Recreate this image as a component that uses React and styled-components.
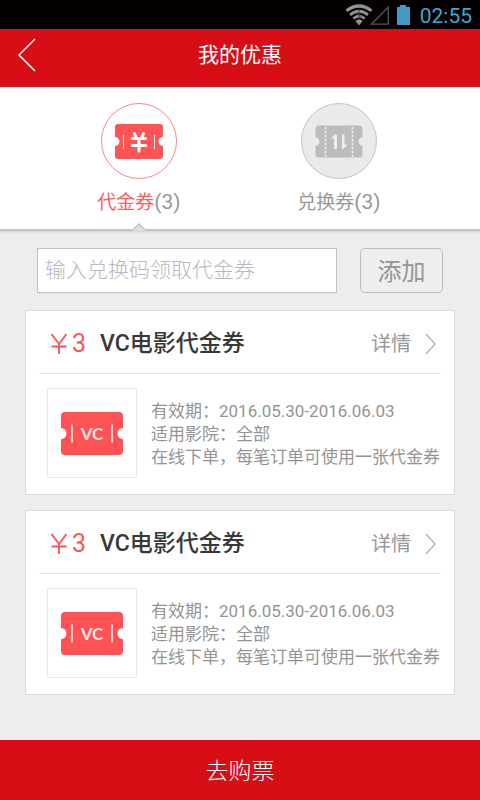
import React, { useState } from 'react';
import styled, { createGlobalStyle } from 'styled-components';

const GlobalStyle = createGlobalStyle`
  *, *::before, *::after { box-sizing: border-box; }
  body {
    margin: 0;
    background: #ededed;
    font-family: Roboto, "Noto Sans CJK SC", sans-serif;
    color: #8f8f8f;
  }
  button, input { font-family: inherit; margin: 0; }
  button { cursor: pointer; }
  h1, h2, p, ul { margin: 0; padding: 0; font-weight: inherit; }
`;

const Screen = styled.div`
  min-height: 100vh;
  display: flex;
  flex-direction: column;
`;

const StatusBar = styled.div`
  height: 29px;
  padding: 0 8px 0 0;
  background: #040000;
  display: flex;
  align-items: center;
  justify-content: flex-end;
`;

const StatusIcons = styled.svg`
  display: block;
  margin-right: 9px;
`;

const Clock = styled.time`
  color: #3ea6d2;
  font-size: 21px;
  line-height: 28px;
  padding-top: 3px;
`;

const Header = styled.header`
  height: 58px;
  padding: 0 10px;
  background: #d80e17;
  color: #fff;
  display: grid;
  grid-template-columns: 36px 1fr 36px;
  align-items: center;
`;

const BackButton = styled.button`
  padding: 0 0 6px 8px;
  border: 0;
  background: none;
  color: inherit;
  display: flex;
`;

const Title = styled.h1`
  font-size: 21px;
  line-height: 30px;
  padding-bottom: 6px;
  text-align: center;
`;

const Tabs = styled.div`
  height: 144px;
  padding: 16px 41px 0 39px;
  background: #fff;
  border-bottom: 2px solid #c4c4c4;
  box-shadow: 0 1px 2px #d0d0d0;
  display: grid;
  grid-template-columns: 1fr 1fr;
`;

const Tab = styled.button`
  position: relative;
  padding: 0;
  border: 0;
  background: none;
  color: ${(p) => (p.$active ? '#ff5e60' : '#999')};
  font-size: 19px;
  font-weight: 400;
  line-height: 28px;
  display: flex;
  flex-direction: column;
  align-items: center;
  gap: 9px;
`;

const TabIcon = styled.span`
  width: 76px;
  height: 76px;
  border: 1px solid ${(p) => (p.$active ? '#f98586' : '#c4c4c4')};
  border-radius: 50%;
  background: ${(p) => (p.$active ? '#fff' : '#eaeaea')};
  display: flex;
  align-items: center;
  justify-content: center;
`;

const Count = styled.span`
  color: #999;
  font-size: 21px;
`;

const Notch = styled.svg`
  position: absolute;
  bottom: -2px;
  left: 50%;
  margin-left: -7px;
`;

const Main = styled.main`
  flex: 1;
  padding: 17px 25px 44px;
`;

const RedeemForm = styled.form`
  padding: 0 12px;
  display: flex;
  gap: 23px;
`;

const CodeInput = styled.input`
  flex: 1;
  min-width: 0;
  height: 45px;
  padding: 0 7px 2px;
  border: 1px solid #c2c2c4;
  border-radius: 0;
  background: #fff;
  color: #555;
  font-size: 21px;
  font-weight: 300;
  &::placeholder { color: #b8b8c0; opacity: 1; }
`;

const AddButton = styled.button`
  width: 83px;
  height: 45px;
  padding: 0 0 2px;
  border: 1px solid #bdbdbd;
  border-radius: 5px;
  background: #eee;
  color: #959595;
  font-size: 24px;
`;

const CouponList = styled.ul`
  list-style: none;
  margin-top: 17px;
  display: grid;
  gap: 15px;
`;

const Coupon = styled.li`
  padding: 0 13px 16px;
  border: 1px solid #d9dddc;
  background: #fff;
`;

const CouponHead = styled.div`
  height: 63px;
  padding: 3px 5px 0 11px;
  border-bottom: 1px solid #e2e2e2;
  display: flex;
  align-items: center;
`;

const Price = styled.span`
  width: 50px;
  color: #fb545b;
  font-size: 25px;
  line-height: 32px;
  display: flex;
  align-items: center;
  gap: 4px;
`;

const CouponName = styled.h2`
  flex: 1;
  color: #383838;
  font-size: 23px;
  font-weight: 500;
  line-height: 32px;
`;

const DetailLink = styled.a`
  color: #979797;
  font-size: 20px;
  line-height: 32px;
  text-decoration: none;
  display: flex;
  align-items: center;
  gap: 14px;
`;

const CouponBody = styled.div`
  padding: 14px 0 0 8px;
  display: flex;
  gap: 14px;
`;

const Thumb = styled.div`
  flex: none;
  width: 90px;
  height: 90px;
  border: 1px solid #e9e9e9;
  display: flex;
  align-items: center;
  justify-content: center;
`;

const Facts = styled.div`
  padding-top: 12px;
  color: #949494;
  font-size: 17px;
  line-height: 23px;
  white-space: nowrap;
`;

const BuyButton = styled.button`
  height: 60px;
  padding: 2px 0 0;
  border: 0;
  background: #d80e17;
  color: #fff;
  font-size: 23px;
  font-weight: 300;
  line-height: 60px;
`;

function PhoneStatus() {
  return (
    <StatusIcons width="66" height="22" viewBox="0 0 66 22" aria-hidden="true">
      <g fill="none" stroke="#929292">
        <path d="M1.5 6.8Q14 -2.8 26.5 6.8" strokeWidth="3.2" />
        <path d="M5 10.8Q14 3.6 23 10.8" strokeWidth="2.8" />
        <path d="M8.4 14.4Q14 9.8 19.6 14.4" strokeWidth="2.6" />
        <path d="M26.5 20.2H43.3V3Z" stroke="#555" strokeWidth="1.3" />
      </g>
      <path d="M10.4 17Q14 14.2 17.6 17L14 21.5Z" fill="#929292" />
      <path d="M14 6v9M11 9l6 4" stroke="#444" strokeWidth="1" />
      <path d="M52 3h3V1h6v2h4v18H52Z" fill="#409cc3" />
    </StatusIcons>
  );
}

function Chevron({ left, size, height, color = 'currentColor' }) {
  const d = left ? `M${size} 1L1 ${height / 2}L${size} ${height - 1}` : `M1 1L${size} ${height / 2}L1 ${height - 1}`;
  return (
    <svg width={size + 1} height={height} aria-hidden="true">
      <path d={d} fill="none" stroke={color} strokeWidth="1.5" />
    </svg>
  );
}

function VoucherIcon() {
  return (
    <svg width="48" height="35" viewBox="0 0 48 35" aria-hidden="true">
      <path d="M3 0H45Q48 0 48 3V13A4.3 4.3 0 0 0 48 22V32Q48 35 45 35H3Q0 35 0 32V22A4.3 4.3 0 0 0 0 13V3Q0 0 3 0Z" fill="#ff5456" />
      <path d="M8.5 11V25M39.5 11V25" stroke="#fff" strokeWidth="1" />
      <path d="M19.5 9.5L21.5 14M28.5 9.5L26.5 14M17.3 14.5H30.7M17.3 21.5H30.7M24 15V27" fill="none" stroke="#fff" strokeWidth="3" strokeLinecap="round" />
    </svg>
  );
}

function ExchangeIcon() {
  return (
    <svg width="48" height="33" viewBox="0 0 48 33" aria-hidden="true">
      <path d="M4 .5H44Q47.500 .5 47.500 4V12Q43.500 13 43.500 16.500Q43.500 20 47.500 21V29Q47.500 32.500 44 32.500H4Q.5 32.500 .5 29V21Q4.500 20 4.500 16.500Q4.500 13 .5 12V4Q.5 .5 4 .5Z" fill="#bcbcbc" />
      <path d="M10.500 2V32M37.500 2V32" stroke="#eee" strokeWidth="1.600" strokeDasharray="2.500 1.500" />
      <path d="M19 24V13.500H16L20 9.500H22V24Z" fill="#eee" />
      <path d="M27 9.500H29.500V19.500H32.500L28.500 24H27Z" fill="#eee" />
    </svg>
  );
}

function VcIcon() {
  return (
    <svg width="62" height="43" viewBox="0 0 62 43" role="img" aria-label="VC">
      <path d="M4 0H58Q62 0 62 4V16A5.300 5.300 0 0 0 62 27V39Q62 43 58 43H4Q0 43 0 39V27A5.300 5.300 0 0 0 0 16V4Q0 0 4 0Z" fill="#ff5254" />
      <path d="M11 12.500V30.500M51 12.500V30.500" stroke="#ffd0cb" strokeWidth="2" />
      <text x="31" y="28" textAnchor="middle" fill="#ffe4e0" fontFamily="Lato, sans-serif" fontSize="17" fontWeight="700">VC</text>
    </svg>
  );
}

function YuanSign() {
  return (
    <svg width="18" height="22" viewBox="0 0 18 22" role="img" aria-label="￥">
      <path d="M1.500 1L9 11L16.500 1M9 11V21M1.500 13.500H16.500" fill="none" stroke="currentColor" strokeWidth="1.900" />
    </svg>
  );
}

const tabs = [
  { id: 'voucher', label: '代金券', count: 3, Icon: VoucherIcon },
  { id: 'exchange', label: '兑换券', count: 3, Icon: ExchangeIcon },
];

const coupons = [1, 2].map((id) => ({
  id,
  price: 3,
  name: 'VC电影代金券',
  period: '2016.05.30-2016.06.03',
  cinema: '全部',
  note: '在线下单，每笔订单可使用一张代金券',
}));

export default function App() {
  const [active, setActive] = useState('voucher');
  const [code, setCode] = useState('');
  return (
    <>
      <GlobalStyle />
      <Screen>
        <StatusBar>
          <PhoneStatus />
          <Clock>02:55</Clock>
        </StatusBar>
        <Header>
          <BackButton aria-label="返回">
            <Chevron left size={17} height={34} />
          </BackButton>
          <Title>我的优惠</Title>
        </Header>
        <Tabs role="tablist">
          {tabs.map(({ id, label, count, Icon }) => (
            <Tab key={id} role="tab" aria-selected={active === id} $active={active === id} onClick={() => setActive(id)}>
              <TabIcon $active={active === id}>
                <Icon />
              </TabIcon>
              <span>
                {label}
                <Count>({count})</Count>
              </span>
              {active === id && (
                <Notch width="14" height="8" aria-hidden="true">
                  <path d="M0 8L7 1L14 8Z" fill="#dedede" />
                  <path d="M0 7.500L7 1L14 7.500" fill="none" stroke="#c4c4c4" strokeWidth="1.500" />
                </Notch>
              )}
            </Tab>
          ))}
        </Tabs>
        <Main>
          <RedeemForm onSubmit={(e) => e.preventDefault()}>
            <CodeInput
              aria-label="兑换码"
              placeholder="输入兑换码领取代金券"
              value={code}
              onChange={(e) => setCode(e.target.value)}
            />
            <AddButton type="submit">添加</AddButton>
          </RedeemForm>
          <CouponList>
            {coupons.map((c) => (
              <Coupon key={c.id}>
                <CouponHead>
                  <Price>
                    <YuanSign />
                    {c.price}
                  </Price>
                  <CouponName>{c.name}</CouponName>
                  <DetailLink href="#detail">
                    详情
                    <Chevron size={10} height={22} color="#b4b4b4" />
                  </DetailLink>
                </CouponHead>
                <CouponBody>
                  <Thumb>
                    <VcIcon />
                  </Thumb>
                  <Facts>
                    <p>有效期：{c.period}</p>
                    <p>适用影院：{c.cinema}</p>
                    <p>{c.note}</p>
                  </Facts>
                </CouponBody>
              </Coupon>
            ))}
          </CouponList>
        </Main>
        <BuyButton>去购票</BuyButton>
      </Screen>
    </>
  );
}
